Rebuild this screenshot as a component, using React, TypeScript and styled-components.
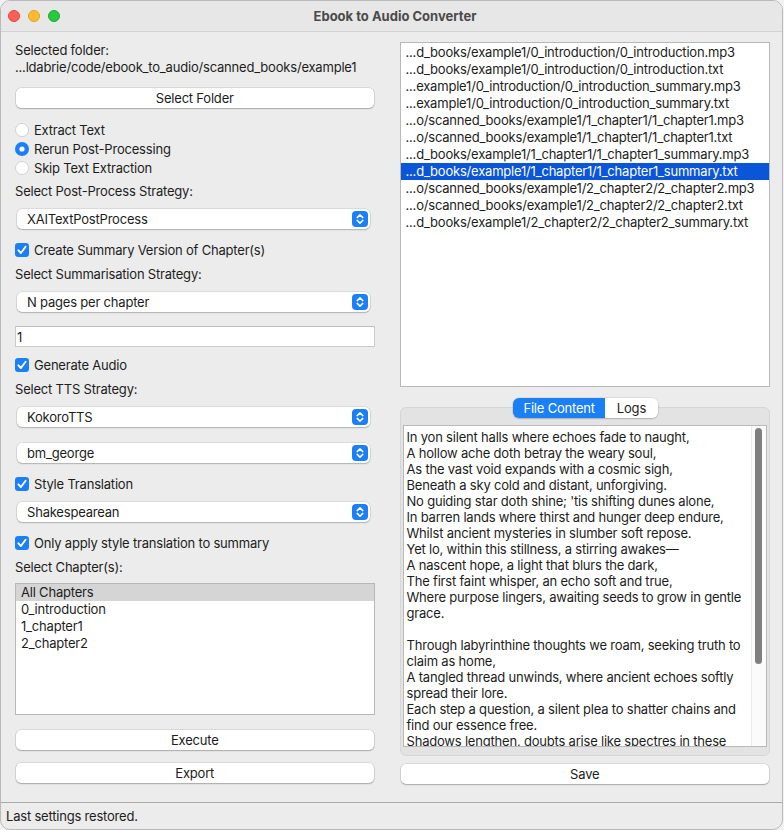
import React from "react";
import styled, { createGlobalStyle } from "styled-components";

const GlobalStyle = createGlobalStyle`
  html, body { margin: 0; padding: 0; background: #f2f2f2; }
  body { font-family: Inter, "Noto Sans", "Liberation Sans", sans-serif; font-size: 13px; letter-spacing: -0.2px; color: #1d1d1d; }
  * { box-sizing: border-box; }
`;

const BLUE = "#1b7ff6";

const Window = styled.div`
  width: 783px;
  height: 830px;
  background: #ececec;
  border: 1px solid #b9b9b9;
  border-radius: 10px;
  overflow: hidden;
  display: flex;
  flex-direction: column;
`;

const TitleBar = styled.div`
  height: 31px;
  flex: none;
  display: grid;
  grid-template-columns: 1fr auto 1fr;
  align-items: center;
  background: #e7e7e7;
  border-bottom: 1px solid #d2d2d2;
  padding: 0 0 0 7px;
`;

const Lights = styled.div`
  display: flex;
  gap: 8px;
`;

const Light = styled.span<{ $c: string; $b: string }>`
  width: 12px;
  height: 12px;
  border-radius: 50%;
  background: ${(p) => p.$c};
  border: 0.5px solid ${(p) => p.$b};
`;

const Title = styled.div`
  font-weight: 700;
  font-size: 13px;
  letter-spacing: 0;
  color: #4a4a4a;
`;

const Main = styled.div`
  flex: 1;
  display: flex;
  gap: 25px;
  padding: 10px 12px 0 14px;
`;

const LeftCol = styled.div`
  width: 360px;
  display: flex;
  flex-direction: column;
`;

const RightCol = styled.div`
  width: 371px;
  display: flex;
  flex-direction: column;
`;

const TextBlock = styled.div<{ $mt?: number }>`
  margin-top: ${(p) => p.$mt ?? 0}px;
  line-height: 17px;
  white-space: nowrap;
`;

const PushButton = styled.button<{ $mt?: number }>`
  margin-top: ${(p) => p.$mt ?? 0}px;
  height: 20px;
  margin-left: 1px;
  margin-right: 1px;
  background: #ffffff;
  border: none;
  border-radius: 5px;
  box-shadow: 0 0 0 0.5px rgba(0, 0, 0, 0.16), 0 1px 1.5px rgba(0, 0, 0, 0.22);
  font-family: inherit;
  font-size: 13px;
  letter-spacing: -0.2px;
  color: #1d1d1d;
  padding: 0;
  line-height: 20px;
`;

const RadioGroup = styled.div<{ $mt?: number }>`
  margin-top: ${(p) => p.$mt ?? 0}px;
  display: flex;
  flex-direction: column;
`;

const OptionRow = styled.div<{ $mt?: number; $h?: number }>`
  margin-top: ${(p) => p.$mt ?? 0}px;
  height: ${(p) => p.$h ?? 19}px;
  display: flex;
  align-items: center;
  gap: 5px;
  white-space: nowrap;
`;

const Combo = styled.div<{ $mt?: number }>`
  margin: ${(p) => p.$mt ?? 0}px 5px 0 2px;
  height: 20px;
  background: #ffffff;
  border-radius: 5px;
  box-shadow: 0 0 0 0.5px rgba(0, 0, 0, 0.14), 0 1px 1.5px rgba(0, 0, 0, 0.2);
  display: flex;
  align-items: center;
  justify-content: space-between;
  padding: 0 2px 0 10px;
`;

const LineInput = styled.div<{ $mt?: number }>`
  margin-top: ${(p) => p.$mt ?? 0}px;
  height: 21px;
  background: #ffffff;
  border: 1px solid #c9c9c9;
  border-top-color: #bdbdbd;
  display: flex;
  align-items: center;
  padding-left: 1px;
`;

const ChapterList = styled.div<{ $mt?: number }>`
  margin-top: ${(p) => p.$mt ?? 0}px;
  height: 132px;
  background: #ffffff;
  border: 1px solid #b8b8b8;
  display: flex;
  flex-direction: column;
`;

const ListItem = styled.div<{ $sel?: "gray" | "blue" }>`
  height: 17px;
  line-height: 17px;
  padding-left: 5px;
  white-space: nowrap;
  overflow: hidden;
  background: ${(p) => (p.$sel === "gray" ? "#d5d5d5" : p.$sel === "blue" ? "#0a55d8" : "transparent")};
  color: ${(p) => (p.$sel === "blue" ? "#ffffff" : "#1d1d1d")};
`;

const FileList = styled.div`
  height: 345px;
  background: #ffffff;
  border: 1px solid #b8b8b8;
  padding-top: 1px;
  display: flex;
  flex-direction: column;
`;

const TabBar = styled.div`
  margin-top: 11px;
  align-self: center;
  display: flex;
  position: relative;
  z-index: 1;
  border-radius: 6px;
  box-shadow: 0 0 0 0.5px rgba(0, 0, 0, 0.12), 0 1px 1.5px rgba(0, 0, 0, 0.18);
  overflow: hidden;
  margin-left: 2px;
`;

const Tab = styled.div<{ $active?: boolean }>`
  height: 20px;
  line-height: 20px;
  padding: 0 ${(p) => (p.$active ? 10 : 12)}px;
  background: ${(p) => (p.$active ? BLUE : "#ffffff")};
  color: ${(p) => (p.$active ? "#ffffff" : "#1d1d1d")};
`;

const TabPane = styled.div`
  margin-top: -11px;
  height: 349px;
  background: #e3e3e3;
  border: 1px solid #d6d6d6;
  border-radius: 6px;
  padding: 17px 2px 8px 2px;
  display: flex;
`;

const TextArea = styled.div`
  flex: 1;
  background: #ffffff;
  border: 1px solid #b9b9b9;
  display: flex;
  overflow: hidden;
`;

const TextContent = styled.div`
  flex: 1;
  padding: 3px 0 0 3px;
  line-height: 16px;
  white-space: pre;
  overflow: hidden;
`;

const ScrollTrack = styled.div`
  width: 15px;
  background: #fbfbfb;
  border-left: 1px solid #ececec;
  padding: 2px 4px 0 3px;
`;

const ScrollThumb = styled.div`
  width: 7px;
  height: 236px;
  border-radius: 4px;
  background: #7f7f7f;
`;

const StatusBar = styled.div`
  height: 27px;
  flex: none;
  border-top: 1px solid #a9a9a9;
  display: flex;
  align-items: center;
  padding-left: 5px;
  padding-bottom: 1px;
`;

const Radio = ({ on }: { on?: boolean }) => (
  <svg width="14" height="14" viewBox="0 0 14 14">
    {on ? (
      <>
        <circle cx="7" cy="7" r="7" fill={BLUE} />
        <circle cx="7" cy="7" r="2.6" fill="#fff" />
      </>
    ) : (
      <circle cx="7" cy="7" r="6.5" fill="#fff" stroke="#c6c6c6" strokeWidth="0.8" />
    )}
  </svg>
);

const Check = () => (
  <svg width="14" height="14" viewBox="0 0 14 14">
    <rect x="0" y="0" width="14" height="14" rx="3.2" fill={BLUE} />
    <path d="M3.4 7.3 L5.9 10 L10.6 3.8" fill="none" stroke="#fff" strokeWidth="1.9" strokeLinecap="round" strokeLinejoin="round" />
  </svg>
);

const Stepper = () => (
  <svg width="16" height="16" viewBox="0 0 16 16">
    <rect x="0" y="0" width="16" height="16" rx="4" fill={BLUE} />
    <path d="M5.2 6.6 L8 3.9 L10.8 6.6" fill="none" stroke="#fff" strokeWidth="1.5" strokeLinecap="round" strokeLinejoin="round" />
    <path d="M5.2 9.4 L8 12.1 L10.8 9.4" fill="none" stroke="#fff" strokeWidth="1.5" strokeLinecap="round" strokeLinejoin="round" />
  </svg>
);

const files = [
  "...d_books/example1/0_introduction/0_introduction.mp3",
  "...d_books/example1/0_introduction/0_introduction.txt",
  "...example1/0_introduction/0_introduction_summary.mp3",
  "...example1/0_introduction/0_introduction_summary.txt",
  "...o/scanned_books/example1/1_chapter1/1_chapter1.mp3",
  "...o/scanned_books/example1/1_chapter1/1_chapter1.txt",
  "...d_books/example1/1_chapter1/1_chapter1_summary.mp3",
  "...d_books/example1/1_chapter1/1_chapter1_summary.txt",
  "...o/scanned_books/example1/2_chapter2/2_chapter2.mp3",
  "...o/scanned_books/example1/2_chapter2/2_chapter2.txt",
  "...d_books/example1/2_chapter2/2_chapter2_summary.txt",
];

const poem = [
  "In yon silent halls where echoes fade to naught,",
  "A hollow ache doth betray the weary soul,",
  "As the vast void expands with a cosmic sigh,",
  "Beneath a sky cold and distant, unforgiving.",
  "No guiding star doth shine; 'tis shifting dunes alone,",
  "In barren lands where thirst and hunger deep endure,",
  "Whilst ancient mysteries in slumber soft repose.",
  "Yet lo, within this stillness, a stirring awakes\u2014",
  "A nascent hope, a light that blurs the dark,",
  "The first faint whisper, an echo soft and true,",
  "Where purpose lingers, awaiting seeds to grow in gentle",
  "grace.",
  "",
  "Through labyrinthine thoughts we roam, seeking truth to",
  "claim as home,",
  "A tangled thread unwinds, where ancient echoes softly",
  "spread their lore.",
  "Each step a question, a silent plea to shatter chains and",
  "find our essence free.",
  "Shadows lengthen, doubts arise like spectres in these",
].join("\n");

export default function App() {
  return (
    <>
      <GlobalStyle />
      <Window>
        <TitleBar>
          <Lights>
            <Light $c="#fe5f57" $b="#e14640" />
            <Light $c="#febc2e" $b="#dfa023" />
            <Light $c="#28c840" $b="#1aab29" />
          </Lights>
          <Title>Ebook to Audio Converter</Title>
          <div />
        </TitleBar>
        <Main>
          <LeftCol>
            <TextBlock>
              Selected folder:
              <br />
              ...ldabrie/code/ebook_to_audio/scanned_books/example1
            </TextBlock>
            <PushButton $mt={12}>Select Folder</PushButton>
            <RadioGroup $mt={12}>
              <OptionRow>
                <Radio />
                Extract Text
              </OptionRow>
              <OptionRow>
                <Radio on />
                Rerun Post-Processing
              </OptionRow>
              <OptionRow>
                <Radio />
                Skip Text Extraction
              </OptionRow>
            </RadioGroup>
            <TextBlock $mt={6}>Select Post-Process Strategy:</TextBlock>
            <Combo $mt={9}>
              XAITextPostProcess
              <Stepper />
            </Combo>
            <OptionRow $mt={12} $h={18}>
              <Check />
              Create Summary Version of Chapter(s)
            </OptionRow>
            <TextBlock $mt={7}>Select Summarisation Strategy:</TextBlock>
            <Combo $mt={9}>
              N pages per chapter
              <Stepper />
            </Combo>
            <LineInput $mt={14}>1</LineInput>
            <OptionRow $mt={9} $h={18}>
              <Check />
              Generate Audio
            </OptionRow>
            <TextBlock $mt={7}>Select TTS Strategy:</TextBlock>
            <Combo $mt={9}>
              KokoroTTS
              <Stepper />
            </Combo>
            <Combo $mt={16}>
              bm_george
              <Stepper />
            </Combo>
            <OptionRow $mt={12} $h={18}>
              <Check />
              Style Translation
            </OptionRow>
            <Combo $mt={9}>
              Shakespearean
              <Stepper />
            </Combo>
            <OptionRow $mt={12} $h={18}>
              <Check />
              Only apply style translation to summary
            </OptionRow>
            <TextBlock $mt={7}>Select Chapter(s):</TextBlock>
            <ChapterList $mt={7}>
              <ListItem $sel="gray">All Chapters</ListItem>
              <ListItem>0_introduction</ListItem>
              <ListItem>1_chapter1</ListItem>
              <ListItem>2_chapter2</ListItem>
            </ChapterList>
            <PushButton $mt={15}>Execute</PushButton>
            <PushButton $mt={13}>Export</PushButton>
          </LeftCol>
          <RightCol>
            <FileList>
              {files.map((f, i) => (
                <ListItem key={f} $sel={i === 7 ? "blue" : undefined}>
                  {f}
                </ListItem>
              ))}
            </FileList>
            <TabBar>
              <Tab $active>File Content</Tab>
              <Tab>Logs</Tab>
            </TabBar>
            <TabPane>
              <TextArea>
                <TextContent>{poem}</TextContent>
                <ScrollTrack>
                  <ScrollThumb />
                </ScrollTrack>
              </TextArea>
            </TabPane>
            <PushButton $mt={8}>Save</PushButton>
          </RightCol>
        </Main>
        <StatusBar>Last settings restored.</StatusBar>
      </Window>
    </>
  );
}
